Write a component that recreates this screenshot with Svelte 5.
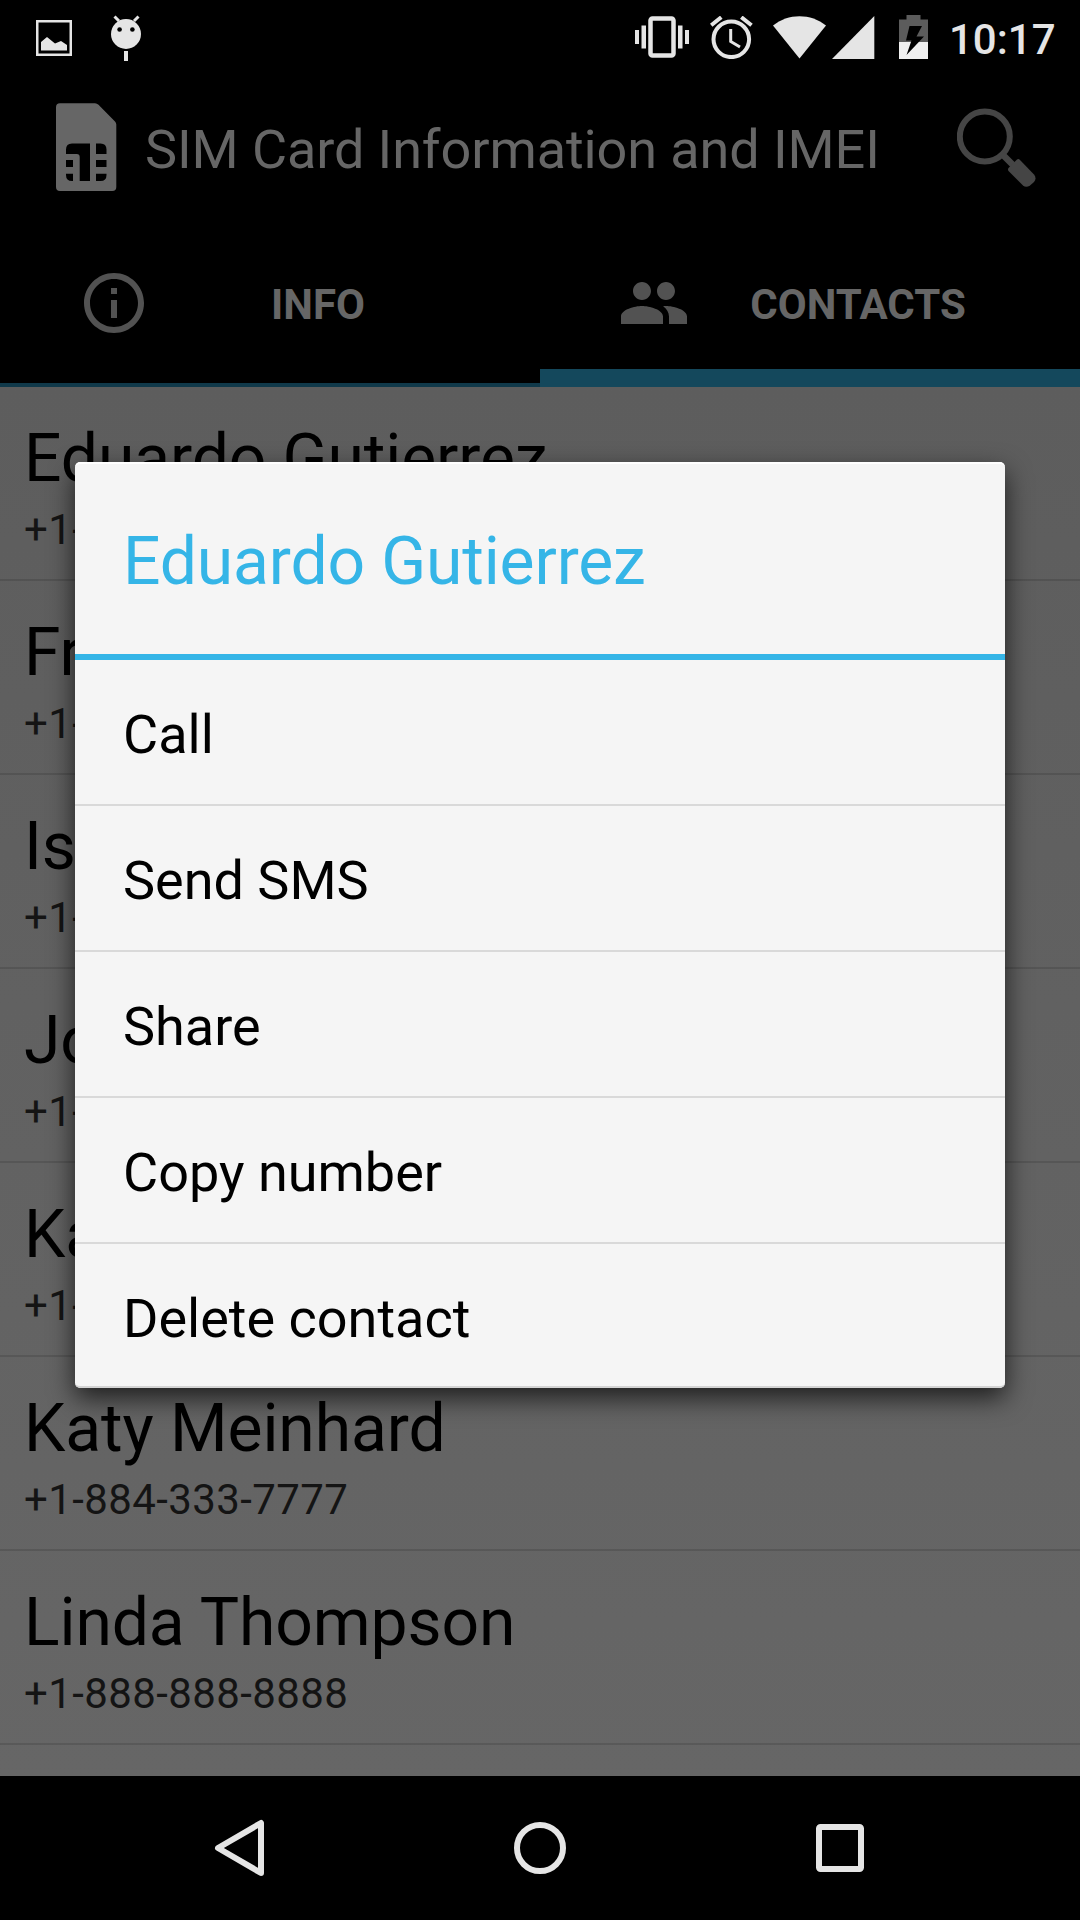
<script lang="ts">
  interface Contact {
    name: string;
    phone: string;
  }

  let contacts = $state<Contact[]>([
    { name: 'Eduardo Gutierrez', phone: '+1-' },
    { name: 'Fr', phone: '+1-' },
    { name: 'Is', phone: '+1-' },
    { name: 'Jo', phone: '+1-' },
    { name: 'Ka', phone: '+1-' },
    { name: 'Katy Meinhard', phone: '+1-884-333-7777' },
    { name: 'Linda Thompson', phone: '+1-888-888-8888' },
  ]);

  let selected = $state(0);
  let activeTab = $state('contacts');

  const actions: string[] = ['Call', 'Send SMS', 'Share', 'Copy number', 'Delete contact'];
</script>

<div class="screen">
  <div class="status-bar">
    <div class="notifications">
      <svg class="picture" width="36" height="36" viewBox="0 0 36 36">
        <rect x="1.25" y="1.25" width="33.5" height="33.5" fill="none" stroke="#e5e5e5" stroke-width="2.5" />
        <path d="M5 22 L11 17 L19 23.5 L25 21 L31 25 V30.5 H5z" fill="#e5e5e5" />
      </svg>
      <svg width="32" height="47" viewBox="0 0 32 47">
        <path d="M3.5 1.5 L8 6 M27.5 1.5 L23 6" stroke="#e5e5e5" stroke-width="3" />
        <circle cx="15" cy="19" r="15" fill="#e5e5e5" />
        <circle cx="8.600" cy="14.500" r="2.300" />
        <circle cx="21.400" cy="14.500" r="2.300" />
        <rect x="13" y="36" width="4" height="10" fill="#e5e5e5" />
      </svg>
    </div>
    <div class="indicators">
      <svg class="vibrate" width="54" height="42" viewBox="0 0 54 42" fill="#e5e5e5">
        <rect x="0" y="14" width="4" height="14" />
        <rect x="6.500" y="9.500" width="4.500" height="23" />
        <rect x="15.500" y="2.500" width="23" height="37" rx="2" fill="none" stroke="#e5e5e5" stroke-width="4.500" />
        <rect x="43" y="9.500" width="4.500" height="23" />
        <rect x="50" y="14" width="4" height="14" />
      </svg>
      <svg class="alarm" width="43" height="43" viewBox="0 0 43 43" fill="none" stroke="#e5e5e5" stroke-width="4">
        <circle cx="21.300" cy="23.300" r="17.800" />
        <path d="M20.700 13 V25.500 L30 31" stroke-width="3" />
        <path d="M1.200 9.300 L11.300 1.200 M31.300 1.200 L41.500 9.300" />
      </svg>
      <svg class="wifi" width="54" height="43" viewBox="0 0 54 43" fill="#e5e5e5">
        <path d="M0 9.500 C15 -3 38 -3 53 9.500 L26.500 42.500z" />
      </svg>
      <svg class="signal" width="43" height="43" viewBox="0 0 43 43" fill="#e5e5e5">
        <path d="M0 43 L42.300 0 V43z" />
      </svg>
      <svg class="battery" width="29" height="44" viewBox="0 0 29 44">
        <path d="M0 4.500 H7.500 V0 H21.500 V4.500 H29 V27 H0z" fill="#5c5c5c" />
        <rect y="27" width="29" height="17" fill="#f0f0f0" />
        <path d="M10.500 11 H23 L17.500 21.500 H25 L7.500 40 L12.500 25.500 H7z" fill="#000" />
      </svg>
      <span class="clock">10:17</span>
    </div>
  </div>

  <header class="app-bar">
    <svg class="sim" width="61" height="94" viewBox="56 103 61 94">
      <path
        d="M60 103.300 H95 Q97 103.300 98.500 104.800 L115 121.500 Q116.300 122.800 116.300 124.500 V187 Q116.300 191 112.300 191 H60 Q56 191 56 187 V107.300 Q56 103.300 60 103.300z"
        fill="#666"
      />
      <path
        d="M66 154 V149.500 Q66 143.500 72 143.500 H90 V181 H79.700 V157 Q79.700 154 76.700 154z M96 143.500 H100.500 Q106.500 143.500 106.500 149.500 V154 H96z M66 160 H73 V167 H66z M96 160 H106.500 V167 H96z M66 173.700 H73 V181 H72 Q66 181 66 175z M96 173.700 H106.500 V175 Q106.500 181 100.500 181 H96z"
        fill="#000"
      />
    </svg>
    <h1>SIM Card Information and IMEI</h1>
    <svg class="search" width="80" height="88" viewBox="957 106 80 88" fill="none" stroke="#454545">
      <circle cx="984.800" cy="136.500" r="25" stroke-width="6" />
      <path d="M1002 154 L1014 166" stroke-width="6.500" />
      <path d="M1017 159.500 Q1018.500 158.500 1020 160 L1034 174.500 Q1037 178 1034 182 L1030 185.500 Q1026 188 1023 185.500 L1008.500 171 Q1007.500 169.500 1008.500 168z" fill="#454545" stroke="none" />
    </svg>
  </header>

  <nav class="tabs">
    <button class="tab" class:active={activeTab === 'info'} onclick={() => (activeTab = 'info')}>
      <svg width="72" height="72" viewBox="0 0 24 24" fill="#525252">
        <path d="M11 17h2v-6h-2v6zm1-15C6.480 2 2 6.480 2 12s4.480 10 10 10 10-4.480 10-10S17.520 2 12 2zm0 18c-4.410 0-8-3.590-8-8s3.590-8 8-8 8 3.590 8 8-3.590 8-8 8zM11 9h2V7h-2v2z" />
      </svg>
      <span>INFO</span>
    </button>
    <button class="tab" class:active={activeTab === 'contacts'} onclick={() => (activeTab = 'contacts')}>
      <svg width="72" height="72" viewBox="0 0 24 24" fill="#525252">
        <path d="M16 11c1.660 0 2.990-1.340 2.990-3S17.660 5 16 5c-1.660 0-3 1.340-3 3s1.340 3 3 3zm-8 0c1.660 0 2.990-1.340 2.990-3S9.660 5 8 5C6.340 5 5 6.340 5 8s1.340 3 3 3zm0 2c-2.330 0-7 1.170-7 3.500V19h14v-2.500c0-2.330-4.670-3.500-7-3.500zm8 0c-.290 0-.620.020-.970.050 1.160.840 1.970 1.970 1.970 3.450V19h6v-2.500c0-2.330-4.670-3.500-7-3.500z" />
      </svg>
      <span>CONTACTS</span>
    </button>
  </nav>

  <main class="contact-list">
    {#each contacts as contact}
      <div class="contact">
        <div class="name">{contact.name}</div>
        <div class="phone">{contact.phone}</div>
      </div>
    {/each}
  </main>

  <footer class="nav-bar">
    <svg width="60" height="60" viewBox="0 0 60 60">
      <path d="M8 30 L51 5 V55z" />
    </svg>
    <svg width="60" height="60" viewBox="0 0 60 60">
      <circle cx="30" cy="30" r="23" />
    </svg>
    <svg width="60" height="60" viewBox="0 0 60 60">
      <rect x="9" y="9" width="42" height="42" rx="1.500" />
    </svg>
  </footer>

  <div class="dialog">
    <h2>{contacts[selected].name}</h2>
    <ul>
      {#each actions as action}
        <li>{action}</li>
      {/each}
    </ul>
  </div>
</div>

<style>
  :global(body) {
    background: #000;
  }

  .screen {
    position: relative;
    display: flex;
    flex-direction: column;
    width: 1080px;
    height: 1920px;
    overflow: hidden;
    background: #000;
    font-family: Roboto, sans-serif;
  }

  svg {
    display: block;
    flex-shrink: 0;
  }

  .status-bar {
    display: flex;
    justify-content: space-between;
    height: 75px;
    padding: 0 25px 0 36px;
  }

  .notifications {
    display: flex;
    gap: 39px;
    padding-top: 15px;
  }

  .picture {
    margin-top: 5px;
  }

  .indicators {
    display: flex;
    align-items: flex-start;
    padding-top: 16px;
  }

  .alarm {
    margin-left: 21px;
  }

  .wifi {
    margin-left: 20px;
  }

  .signal {
    margin-left: 5px;
  }

  .battery {
    margin: -1px 0 0 24px;
  }

  .clock {
    width: 106px;
    margin: -1px 0 0 21px;
    color: #e5e5e5;
    font-size: 42px;
    font-weight: 500;
    line-height: 49px;
    white-space: nowrap;
  }

  .app-bar {
    display: flex;
    align-items: center;
    height: 150px;
    margin-bottom: 12px;
    padding: 0 43px 0 56px;
  }

  h1 {
    flex: 1;
    margin: 0 0 0 28px;
    padding-bottom: 2px;
    color: #666;
    font-size: 54px;
    font-weight: 400;
    letter-spacing: -0.1px;
    white-space: nowrap;
  }

  .tabs {
    display: flex;
    height: 150px;
  }

  .tab {
    flex: 1;
    display: flex;
    align-items: center;
    padding: 0 54px 14px 78px;
    border: none;
    border-bottom: 4px solid #10394a;
    background: #000;
    color: #666;
    font-family: inherit;
    font-size: 42px;
    font-weight: 700;
  }

  .tab.active {
    padding-bottom: 0;
    border-bottom: 18px solid #14485c;
  }

  .tab span {
    flex: 1;
    padding-top: 2px;
    text-align: center;
  }

  .contact-list {
    flex: 1;
    overflow: hidden;
    background: linear-gradient(#5d5d5d, #666);
  }

  .contact {
    box-sizing: border-box;
    height: 194px;
    padding: 33px 24px 0;
    border-bottom: 2px solid rgba(0, 0, 0, 0.12);
  }

  .name {
    color: #000;
    font-size: 66px;
    letter-spacing: -0.1px;
    line-height: 78px;
  }

  .phone {
    margin-top: 7px;
    color: #141414;
    font-size: 42px;
    letter-spacing: 0.4px;
    line-height: 50px;
  }

  .nav-bar {
    display: flex;
    justify-content: space-between;
    align-items: center;
    height: 144px;
    padding: 0 210px;
    box-sizing: border-box;
  }

  .nav-bar svg {
    fill: none;
    stroke: #e5e5e5;
    stroke-width: 6;
    stroke-linejoin: round;
  }

  .dialog {
    position: absolute;
    top: 462px;
    left: 75px;
    width: 930px;
    height: 926px;
    overflow: hidden;
    border-radius: 5px;
    background: #f5f5f5;
    box-shadow: 0 10px 26px rgba(0, 0, 0, 0.7);
  }

  .dialog::after {
    content: '';
    position: absolute;
    inset: 0;
    border-top: 2px solid #fff;
    border-bottom: 2px solid #d4d4d4;
    border-radius: 5px;
  }

  h2 {
    box-sizing: border-box;
    height: 198px;
    margin: 0;
    padding-left: 48px;
    border-bottom: 6px solid #35b5e7;
    color: #35b5e7;
    font-size: 66px;
    font-weight: 400;
    letter-spacing: -0.15px;
    line-height: 200px;
  }

  ul {
    margin: 0;
    padding: 0;
    list-style: none;
  }

  li {
    height: 144px;
    padding-left: 48px;
    border-bottom: 2px solid #d9d9d9;
    color: #000;
    font-size: 54px;
    line-height: 150px;
  }
</style>
